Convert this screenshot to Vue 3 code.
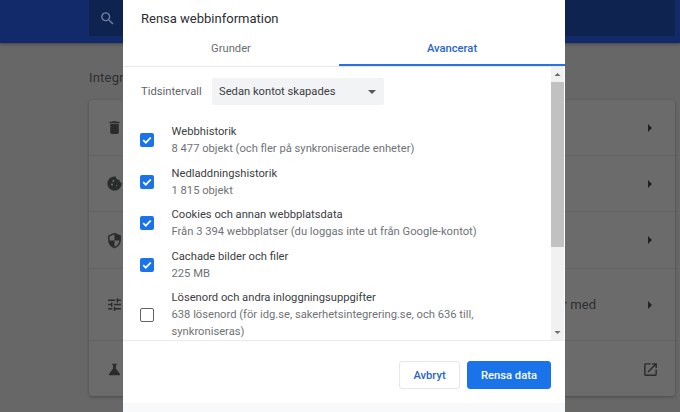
<script setup>
const rows = [
  { icon: 'trash', end: 'arrow' },
  { icon: 'cookie', end: 'arrow' },
  { icon: 'shield', end: 'arrow' },
  { icon: 'tune', end: 'arrow', label: 'er med', tall: true },
  { icon: 'flask', end: 'link', tall: true }
]
const items = [
  { title: 'Webbhistorik', sub: '8 477 objekt (och fler på synkroniserade enheter)', on: true },
  { title: 'Nedladdningshistorik', sub: '1 815 objekt', on: true },
  { title: 'Cookies och annan webbplatsdata', sub: 'Från 3 394 webbplatser (du loggas inte ut från Google-kontot)', on: true },
  { title: 'Cachade bilder och filer', sub: '225 MB', on: true },
  { title: 'Lösenord och andra inloggningsuppgifter', sub: '638 lösenord (för idg.se, sakerhetsintegrering.se, och 636 till, synkroniseras)', on: false }
]
</script>

<template>
  <div class="page">
    <header class="bar">
      <div class="search">
        <svg class="search-icon" viewBox="0 0 24 24"><path d="M15.5 14h-.79l-.28-.27A6.47 6.47 0 0 0 16 9.5 6.5 6.5 0 1 0 9.5 16c1.61 0 3.09-.59 4.23-1.57l.27.28v.79l5 4.99L20.49 19l-4.99-5zm-6 0C7.01 14 5 11.99 5 9.5S7.01 5 9.5 5 14 7.01 14 9.5 11.99 14 9.5 14z"/></svg>
      </div>
    </header>
    <main class="content">
      <h2 class="heading">Integritet och säkerhet</h2>
      <section class="card">
        <div v-for="row in rows" :key="row.icon" class="card-row" :class="{ tall: row.tall }">
          <svg class="row-icon" viewBox="0 0 24 24">
            <path v-if="row.icon === 'trash'" d="M6 19c0 1.1.9 2 2 2h8c1.1 0 2-.9 2-2V7H6v12zM19 4h-3.5l-1-1h-5l-1 1H5v2h14V4z"/>
            <path v-else-if="row.icon === 'cookie'" d="M21.95 10.99c-1.79-.03-3.7-1.95-2.68-4.22-2.98 1-5.77-1.59-5.19-4.56C6.95.71 2 6.58 2 12c0 5.52 4.48 10 10 10 5.89 0 10.54-5.08 9.95-11.01zM8.5 15c-.83 0-1.5-.67-1.5-1.5S7.67 12 8.5 12s1.5.67 1.5 1.5S9.33 15 8.5 15zm2-5C9.67 10 9 9.33 9 8.5S9.67 7 10.5 7s1.5.67 1.5 1.5-.67 1.5-1.5 1.5zm4.5 6c-.55 0-1-.45-1-1s.45-1 1-1 1 .45 1 1-.45 1-1 1z"/>
            <path v-else-if="row.icon === 'shield'" fill-rule="evenodd" d="M12 1 3 5v6c0 5.55 3.84 10.74 9 12 5.16-1.26 9-6.45 9-12V5l-9-4zm0 2.2V12H5V6.3l7-3.1zM12 12h7c-.53 4.12-3.28 7.79-7 8.94V12z"/>
            <path v-else-if="row.icon === 'tune'" d="M3 17v2h6v-2H3zM3 5v2h10V5H3zm10 16v-2h8v-2h-8v-2h-2v6h2zM7 9v2H3v2h4v2h2V9H7zm14 4v-2H11v2h10zm-6-4h2V7h4V5h-4V3h-2v6z"/>
            <path v-else d="M19.8 18.4 14 10.67V6.5l1.35-1.69c.26-.33.03-.81-.39-.81H9.04c-.42 0-.65.48-.39.81L10 6.5v4.17L4.2 18.4c-.49.66-.02 1.6.8 1.6h14c.82 0 1.29-.94.8-1.6z"/>
          </svg>
          <span v-if="row.label" class="row-label">{{ row.label }}</span>
          <svg v-if="row.end === 'arrow'" class="row-arrow" viewBox="0 0 6 10"><path d="M1 1l4 4-4 4z"/></svg>
          <svg v-else class="row-link" viewBox="0 0 24 24"><path d="M19 19H5V5h7V3H5a2 2 0 0 0-2 2v14a2 2 0 0 0 2 2h14c1.1 0 2-.9 2-2v-7h-2v7zM14 3v2h3.59l-9.83 9.83 1.41 1.41L19 6.41V10h2V3h-7z"/></svg>
        </div>
      </section>
    </main>

    <div class="dialog">
      <h1 class="title">Rensa webbinformation</h1>
      <nav class="tabs">
        <div class="tab">Grunder</div>
        <div class="tab active">Avancerat</div>
      </nav>
      <div class="body">
        <div class="scroll">
          <div class="range">
            <span class="range-label">Tidsintervall</span>
            <div class="select">
              <span>Sedan kontot skapades</span>
              <i class="caret"></i>
            </div>
          </div>
          <div class="list">
            <div v-for="item in items" :key="item.title" class="item">
              <span class="box" :class="{ on: item.on }">
                <svg v-if="item.on" viewBox="0 0 14 14"><path d="M3.2 7.2l2.6 2.5 5-5.2" fill="none" stroke="#fff" stroke-width="1.8"/></svg>
              </span>
              <div class="item-text">
                <div class="item-title">{{ item.title }}</div>
                <div class="item-sub">{{ item.sub }}</div>
              </div>
            </div>
          </div>
        </div>
        <div class="scrollbar">
          <svg class="sb-arrow" viewBox="0 0 13 15"><path d="M3.5 9l3-3 3 3z"/></svg>
          <div class="thumb"></div>
          <div class="sb-rest"></div>
          <svg class="sb-arrow" viewBox="0 0 13 15"><path d="M3.5 6l3 3 3-3z"/></svg>
        </div>
      </div>
      <footer class="actions">
        <button class="btn">Avbryt</button>
        <button class="btn primary">Rensa data</button>
      </footer>
      <div class="strip"></div>
    </div>
  </div>
</template>

<style>
html, body { margin: 0; padding: 0; }
</style>

<style scoped>
.page {
  position: relative;
  width: 680px;
  height: 412px;
  overflow: hidden;
  background: #666766;
  font-family: Roboto, "Liberation Sans", sans-serif;
  display: flex;
  flex-direction: column;
}
.bar {
  height: 43px;
  flex: none;
  background: #12296a;
  box-shadow: 0 1px 3px rgba(0,0,0,.35);
  padding: 0 5px 7px 89px;
  box-sizing: border-box;
  display: flex;
}
.search {
  flex: 1;
  background: #0f2350;
  border-radius: 0 0 2px 2px;
  display: flex;
  align-items: center;
  padding-left: 10px;
}
.search-icon { width: 17px; height: 17px; fill: #6d7f9f; }
.content { padding: 0 5px 0 89px; flex: 1; }
.heading {
  margin: 0;
  padding-top: 27px;
  height: 30px;
  font-size: 13px;
  line-height: 15px;
  font-weight: 400;
  color: #2e2f2f;
  letter-spacing: .2px;
}
.card {
  background: #6b6b6b;
  border-radius: 3px;
  box-shadow: 0 1px 3px rgba(0,0,0,.3);
  height: 296px;
  display: flex;
  flex-direction: column;
}
.card-row {
  flex: none;
  height: 56px;
  display: flex;
  align-items: center;
  padding: 0 22px 0 17px;
  border-bottom: 1px solid #636363;
  box-sizing: border-box;
}
.card-row:nth-child(3) { height: 57px; }
.card-row.tall { height: 72px; }
.card-row:last-child { border-bottom: 0; height: 56px; }
.row-icon { width: 17px; height: 17px; fill: #2a2b2b; flex: none; }
.row-label { margin-left: auto; margin-right: 51px; font-size: 13px; color: #2e2f2f; }
.row-arrow { margin-left: auto; width: 6px; height: 10px; fill: #222; flex: none; }
.row-label + .row-arrow { margin-left: 0; }
.row-link { margin-left: auto; width: 17px; height: 17px; fill: #2a2b2b; flex: none; margin-right: -6px; }

.dialog {
  position: absolute;
  left: 123px;
  top: 0;
  width: 442px;
  height: 412px;
  background: #fff;
  display: flex;
  flex-direction: column;
}
.title {
  margin: 0;
  padding: 10px 18px 0;
  height: 20px;
  font-size: 13px;
  line-height: 17px;
  font-weight: 400;
  color: #2c2e31;
}
.tabs {
  display: flex;
  height: 37px;
  box-sizing: border-box;
  border-bottom: 1px solid #e6e8eb;
}
.tab {
  flex: 0 0 216px;
  text-align: center;
  font-size: 11.2px;
  line-height: 37px;
  color: #6a6e73;
  font-weight: 400;
}
.tab.active {
  flex: 1;
  color: #2a65c9;
  font-weight: 500;
  height: 36px;
  box-sizing: border-box;
  border-bottom: 2px solid #2a72dd;
}
.body { display: flex; height: 273px; flex: none; }
.scroll { flex: 1; overflow: hidden; padding: 11px 0 0 18px; }
.range { display: flex; align-items: center; height: 27px; }
.range-label { width: 71px; font-size: 11.2px; color: #5f6368; }
.select {
  width: 172px;
  height: 27px;
  box-sizing: border-box;
  background: #f1f3f4;
  border-radius: 2px;
  display: flex;
  align-items: center;
  justify-content: space-between;
  padding: 0 8px 0 7px;
  font-size: 11.2px;
  color: #3c4043;
}
.caret {
  width: 0;
  height: 0;
  border-left: 4px solid transparent;
  border-right: 4px solid transparent;
  border-top: 4px solid #55585c;
}
.list { padding-top: 18px; }
.item { display: flex; align-items: center; padding-bottom: 7.5px; }
.box {
  width: 14px;
  height: 14px;
  margin-left: -1px;
  box-sizing: border-box;
  border: 1.5px solid #5f6368;
  border-radius: 2px;
  flex: none;
  display: flex;
}
.box.on { background: #1a73e8; border: 0; }
.box svg { width: 14px; height: 14px; }
.item-text { margin-left: 17.5px; width: 345px; }
.item-title { font-size: 11.2px; line-height: 17px; color: #3c4043; }
.item-sub { font-size: 11.2px; line-height: 17px; color: #6f7377; }
.scrollbar {
  width: 13px;
  margin-right: 1px;
  background: #f1f1f1;
  display: flex;
  flex-direction: column;
}
.sb-arrow { width: 13px; height: 15px; flex: none; fill: #6b6b6b; }
.thumb { height: 165px; background: #c1c1c1; flex: none; }
.sb-rest { flex: 1; }
.actions {
  flex: none;
  height: 63px;
  box-sizing: border-box;
  border-top: 1px solid #e8eaed;
  padding: 20px 14px 0 0;
  display: flex;
  justify-content: flex-end;
  align-items: flex-start;
  gap: 7px;
}
.btn {
  height: 28px;
  width: 61px;
  padding: 0;
  border: 1px solid #e4e6e9;
  border-radius: 3px;
  background: #fff;
  color: #2a65c9;
  font: 500 11.2px Roboto, sans-serif;
}
.btn.primary { width: 84px; background: #1a73e8; border-color: #1a73e8; color: #fff; }
.strip { flex: 1; background: #f8f9fa; }
</style>
